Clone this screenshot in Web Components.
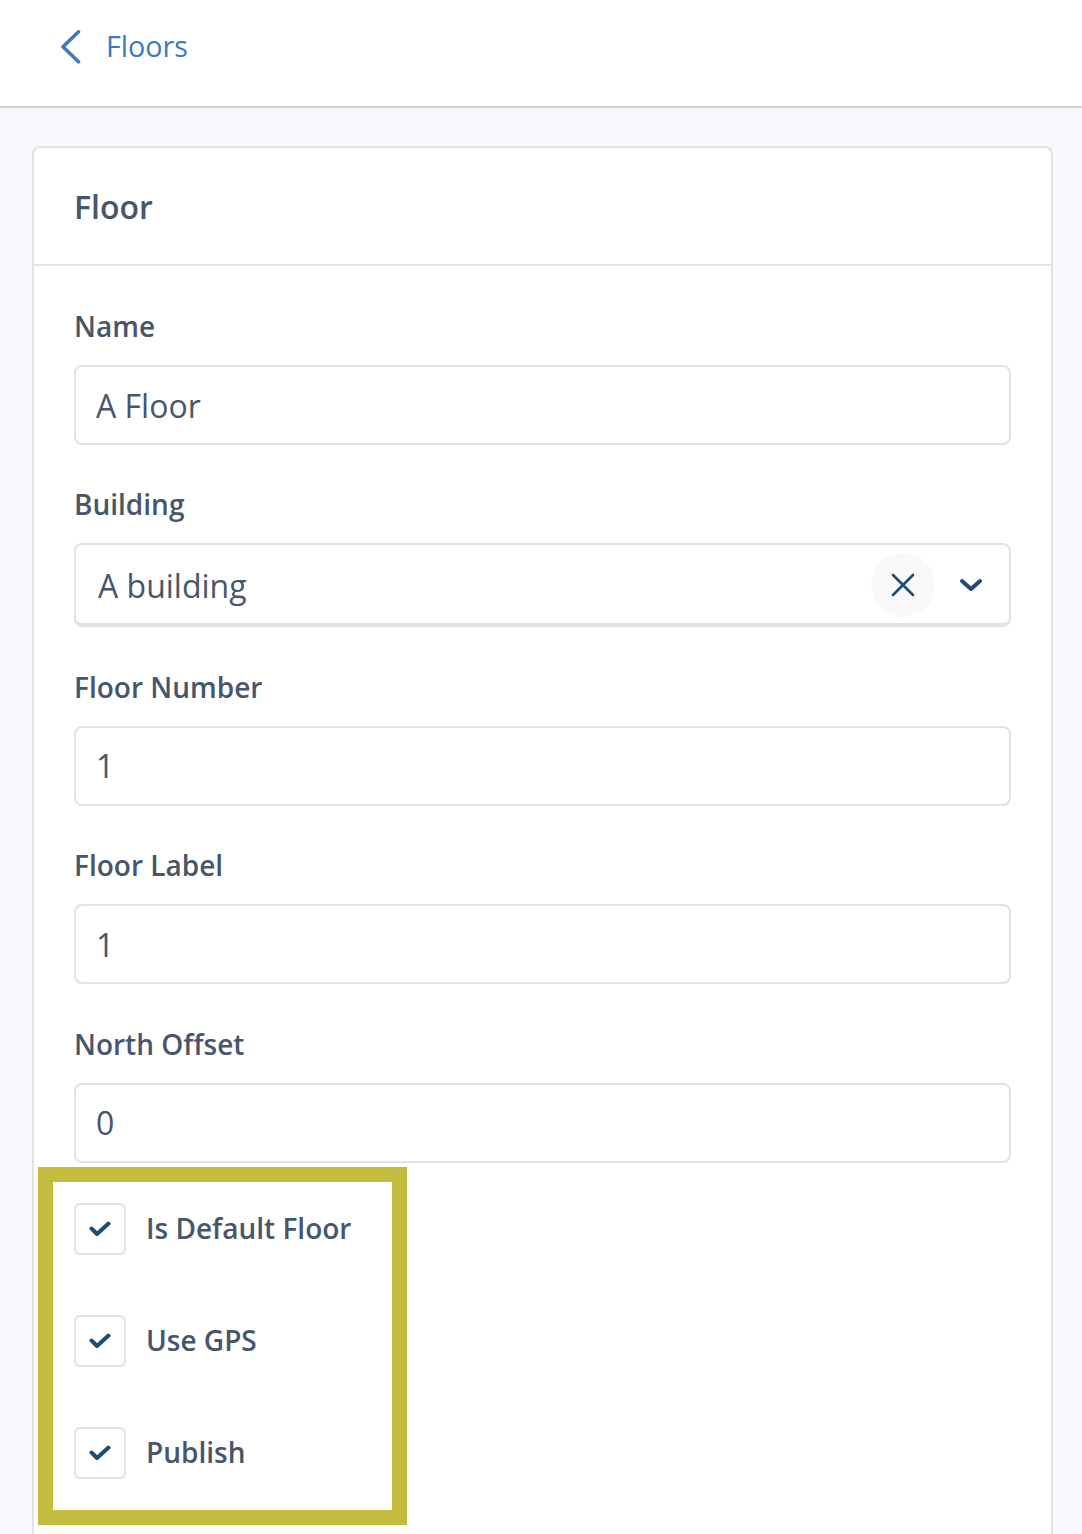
<!DOCTYPE html>
<html>
<head>
<meta charset="utf-8">
<style>
    html, body { margin: 0; padding: 0; }
    body {
        background: #f8f9fd;
        font-family: "Open Sans", "Liberation Sans", sans-serif;
        color: #47566a;
        height: 1534px;
        overflow: hidden;
    }
</style>
</head>
<body>
<page-header label="Floors"></page-header>
<form-card heading="Floor">
    <text-field label="Name" value="A Floor"></text-field>
    <select-field label="Building" value="A building"></select-field>
    <text-field label="Floor Number" value="1"></text-field>
    <text-field label="Floor Label" value="1"></text-field>
    <text-field label="North Offset" value="0"></text-field>
    <check-group>
        <check-row label="Is Default Floor"></check-row>
        <check-row label="Use GPS"></check-row>
        <check-row label="Publish"></check-row>
    </check-group>
</form-card>

<script>
const fieldStyles = `
    :host { display: block; margin-bottom: 39.4px; }
    label {
        display: block;
        height: 40px;
        line-height: 40px;
        margin-bottom: 19px;
        font-size: 28px;
        font-weight: 600;
        color: #47566a;
    }
    .box {
        box-sizing: border-box;
        background: #fff;
        border: 2px solid #e2e2e2;
        border-radius: 8px;
        height: 80px;
        display: flex;
        align-items: center;
        font-size: 32px;
        color: #47566a;
    }
`;

class PageHeader extends HTMLElement {
    connectedCallback() {
        this.attachShadow({ mode: 'open' }).innerHTML = `
            <style>
                :host {
                    display: block;
                    box-sizing: border-box;
                    height: 108px;
                    background: #fff;
                    border-bottom: 2px solid #d4d5d7;
                    box-shadow: 0 2px 12px rgba(0, 0, 0, 0.03);
                }
                a {
                    display: flex;
                    align-items: center;
                    height: 94px;
                    padding-left: 60px;
                    gap: 26px;
                    color: #3b7abd;
                    font-size: 28.7px;
                    font-weight: 500;
                    text-decoration: none;
                }
                span { margin: -3px 0 0 -1px; }
                svg { width: 21px; height: 34px; fill: none; stroke: #3b7abd; stroke-width: 3.6; stroke-linecap: round; stroke-linejoin: round; }
            </style>
            <a href="#">
                <svg viewBox="0 0 21 34"><path d="M18.5 1.8 3 16.8 18.5 31.8"/></svg>
                <span>${this.getAttribute('label')}</span>
            </a>`;
    }
}

class FormCard extends HTMLElement {
    connectedCallback() {
        this.attachShadow({ mode: 'open' }).innerHTML = `
            <style>
                :host {
                    display: block;
                    box-sizing: border-box;
                    width: 1021px;
                    height: 1388px;
                    margin: 38px 0 0 32px;
                    background: #fff;
                    border: 2px solid #e2e2e2;
                    border-bottom: 0;
                    border-radius: 8px 8px 0 0;
                }
                h2 {
                    box-sizing: border-box;
                    margin: 0;
                    height: 118px;
                    padding: 0 40px;
                    line-height: 117px;
                    font-size: 32px;
                    font-weight: 600;
                    color: #47566a;
                    border-bottom: 2px solid #e2e2e2;
                }
                .body { padding: 40px 40px 0; }
            </style>
            <h2>${this.getAttribute('heading')}</h2>
            <div class="body"><slot></slot></div>`;
    }
}

class TextField extends HTMLElement {
    connectedCallback() {
        this.attachShadow({ mode: 'open' }).innerHTML = `
            <style>
                ${fieldStyles}
                .box { padding-left: 20px; }
            </style>
            <label>${this.getAttribute('label')}</label>
            <div class="box">${this.getAttribute('value')}</div>`;
    }
}

class SelectField extends HTMLElement {
    connectedCallback() {
        this.attachShadow({ mode: 'open' }).innerHTML = `
            <style>
                ${fieldStyles}
                .box {
                    height: 84px;
                    border-bottom-width: 4px;
                    padding: 2px 26px 0 22px;
                }
                .value { flex: 1; }
                .clear {
                    width: 64px;
                    height: 64px;
                    margin-right: 24px;
                    border-radius: 50%;
                    background: #f9f9f9;
                    display: flex;
                    align-items: center;
                    justify-content: center;
                }
                svg { display: block; fill: none; stroke: #1c4c78; stroke-linecap: round; stroke-linejoin: round; }
                .clear svg { width: 24px; height: 24px; stroke-width: 2.6; }
                .arrow { width: 24px; height: 14px; stroke-width: 4; }
            </style>
            <label>${this.getAttribute('label')}</label>
            <div class="box">
                <span class="value">${this.getAttribute('value')}</span>
                <span class="clear"><svg viewBox="0 0 24 24"><path d="M2 2 22 22M22 2 2 22"/></svg></span>
                <svg class="arrow" viewBox="0 0 24 14"><path d="M3 3 12 11 21 3"/></svg>
            </div>`;
    }
}

class CheckGroup extends HTMLElement {
    connectedCallback() {
        this.attachShadow({ mode: 'open' }).innerHTML = `
            <style>
                :host {
                    display: block;
                    box-sizing: border-box;
                    width: 369px;
                    height: 358px;
                    margin: -35px 0 0 -36px;
                    padding: 21px 0 0 21px;
                    border: 15px solid #c4bc3c;
                    background: #fff;
                }
            </style>
            <slot></slot>`;
    }
}

class CheckRow extends HTMLElement {
    connectedCallback() {
        this.attachShadow({ mode: 'open' }).innerHTML = `
            <style>
                :host {
                    display: flex;
                    align-items: center;
                    height: 52px;
                    gap: 20px;
                    font-size: 28px;
                    font-weight: 600;
                    color: #47566a;
                }
                :host(:not(:last-child)) { margin-bottom: 60px; }
                .label { margin-top: -1px; }
                .tick {
                    box-sizing: border-box;
                    width: 52px;
                    height: 52px;
                    border: 2px solid #e2e2e2;
                    border-radius: 6px;
                    display: flex;
                    align-items: center;
                    justify-content: center;
                }
                svg { width: 22px; height: 16px; fill: none; stroke: #1c4c78; stroke-width: 4; stroke-linecap: round; stroke-linejoin: round; }
            </style>
            <span class="tick"><svg viewBox="0 0 22 16"><path d="M2.5 7.5 8 13 19.5 2.5"/></svg></span>
            <span class="label">${this.getAttribute('label')}</span>`;
    }
}

customElements.define('page-header', PageHeader);
customElements.define('form-card', FormCard);
customElements.define('text-field', TextField);
customElements.define('select-field', SelectField);
customElements.define('check-group', CheckGroup);
customElements.define('check-row', CheckRow);
</script>
</body>
</html>
